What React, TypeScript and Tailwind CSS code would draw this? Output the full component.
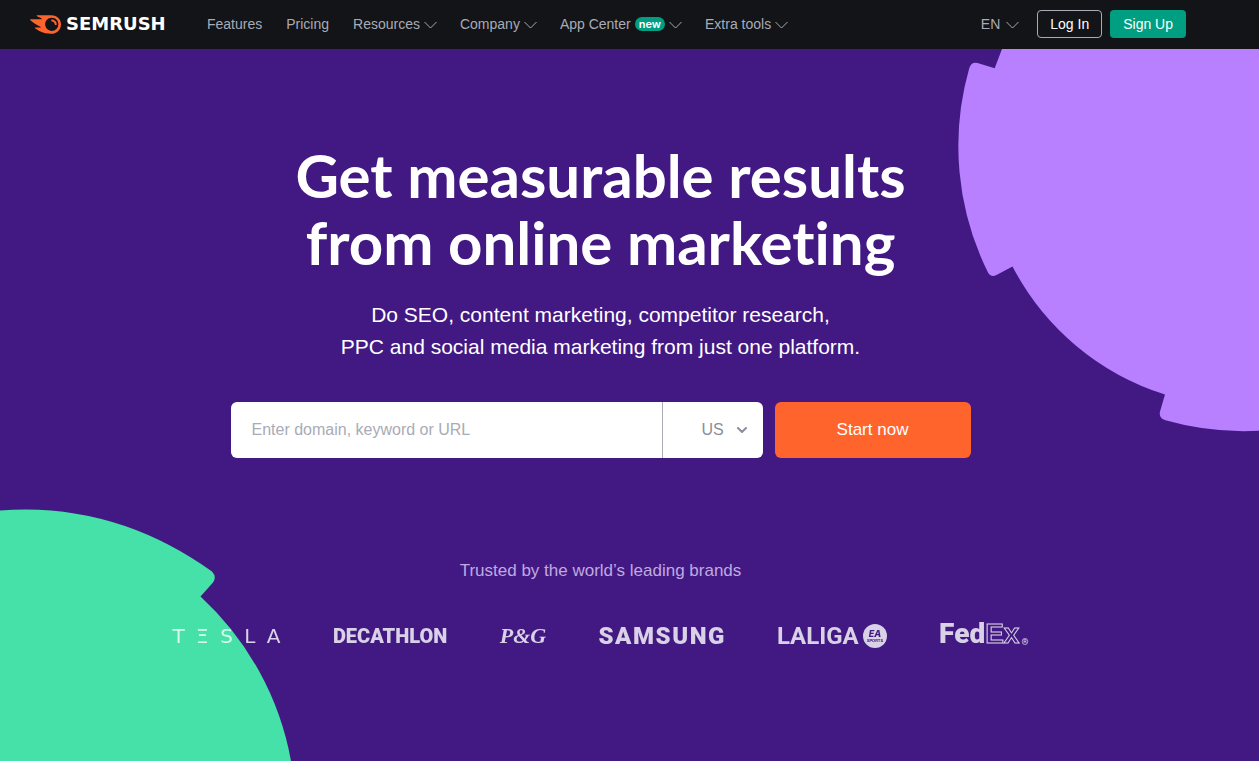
import React from "react";
import { SiSemrush } from "react-icons/si";

function Chevron() {
  return (
    <svg className="ml-1 mt-0.5 h-2 w-3 overflow-visible" viewBox="0 0 12 8" fill="none" stroke="currentColor" aria-hidden="true">
      <path d="M0.5 1 6.5 7 12.5 1" />
    </svg>
  );
}

const menus = [
  { label: "Resources" },
  { label: "Company" },
  { label: "App Center", badge: "new" },
  { label: "Extra tools" },
];

function Header() {
  return (
    <header className="flex h-[49px] items-center justify-between bg-[#121417] pr-[73px] pb-px pl-[30px] text-sm text-[#a9abb6]">
      <div className="flex items-center">
        <a href="#home" className="flex w-[177px] items-center text-white">
          <SiSemrush className="size-[31px] text-[#ff642d]" aria-hidden="true" />
          <span className="ml-[5px] font-['DejaVu_Sans'] text-lg leading-6 font-bold">SEMRUSH</span>
        </a>
        <nav className="flex items-center gap-6">
          <a href="#features">Features</a>
          <a href="#pricing">Pricing</a>
          {menus.map((m) => (
            <button key={m.label} type="button" className="flex items-center">
              {m.label}
              {m.badge && (
                <span className="ml-1 rounded-full bg-[#009f81] px-1 font-['Inter'] text-[11px] leading-[14px] font-semibold text-white">
                  {m.badge}
                </span>
              )}
              <Chevron />
            </button>
          ))}
        </nav>
      </div>
      <div className="flex items-center">
        <button type="button" className="flex items-center gap-0.5">
          EN
          <Chevron />
        </button>
        <a href="#login" className="ml-[19px] rounded border border-[#a9abb6] px-3 leading-[26px] text-white">
          Log In
        </a>
        <a href="#signup" className="ml-2 rounded bg-[#009f81] px-[13px] leading-7 text-white">
          Sign Up
        </a>
      </div>
    </header>
  );
}

function Shapes() {
  return (
    <>
      <svg className="absolute top-0 right-0 h-[383px] w-[301px]" viewBox="958 49 301 383" fill="#b880ff" aria-hidden="true">
        <path d="M1002 49 994.7 68.3 977.5 63Q971.5 61.5 969.3 68A284 284 0 0 0 988 272.5Q990.5 277.3 996 275.3L1012.5 266.5A260 260 0 0 0 1165 394.5L1160 411.5Q1158.5 418 1165.5 420.2A284 284 0 0 0 1259 430.7V49Z" />
      </svg>
      <svg className="absolute bottom-0 left-0 h-[253px] w-[292px]" viewBox="0 508 292 253" fill="#46e1a8" aria-hidden="true">
        <path d="M0 510.5A310 310 0 0 1 125 526Q170 541.5 212 571.5Q217 577 213 582.5L200.5 596.5A295 295 0 0 1 291 761H0Z" />
      </svg>
    </>
  );
}

function Brands() {
  return (
    <ul className="flex h-8 items-center justify-between font-['Roboto',sans-serif] leading-8 font-black whitespace-nowrap text-white opacity-80">
      <li aria-label="Tesla" className="flex w-[108px] justify-between font-['DejaVu_Sans'] text-xl leading-8 font-normal">
        {["T", "Ξ", "S", "L", "A"].map((c) => (
          <span key={c}>{c}</span>
        ))}
      </li>
      <li className="text-xl leading-8">DECATHLON</li>
      <li className="font-['Liberation_Serif'] text-[22px] font-bold italic">P&amp;G</li>
      <li aria-label="Samsung" className="flex w-[126px] justify-between text-2xl leading-8">
        {"SAMSUNG".split("").map((c, i) => (
          <span key={i}>{c}</span>
        ))}
      </li>
      <li className="flex items-center gap-1 text-2xl leading-8 font-bold">
        LALIGA
        <svg className="size-6" viewBox="0 0 24 24" role="img" aria-label="EA Sports">
          <circle cx="12" cy="12" r="12" fill="#fff" />
          <text x="12" y="12.5" textAnchor="middle" fontFamily="Inter" fontStyle="italic" fontWeight="800" fontSize="9" fill="#421983">EA</text>
          <text x="12" y="17.5" textAnchor="middle" fontFamily="Inter" fontWeight="700" fontSize="4" fill="#421983">SPORTS</text>
        </svg>
      </li>
      <li className="flex items-center pb-1 text-[28px] leading-8">
        <span>Fed</span>
        <span className="font-['Liberation_Sans'] text-transparent [-webkit-text-stroke:1px_white]">Ex</span>
        <span className="mt-4 ml-0.5 text-[9px]">®</span>
      </li>
    </ul>
  );
}

export default function App() {
  return (
    <div className="flex min-h-screen flex-col bg-[#421983] font-['Liberation_Sans',Arial,sans-serif]">
      <Header />
      <main className="relative grow overflow-hidden pr-[58px]">
        <Shapes />
        <div className="relative flex flex-col items-center pt-[93px] text-center text-white">
          <h1 className="font-['Lato'] text-[60px] leading-[67px] font-bold [font-variant-ligatures:none]">
            Get measurable results
            <br />
            from online marketing
          </h1>
          <p className="mt-[23px] text-[21px] leading-8">
            Do SEO, content marketing, competitor research,
            <br />
            PPC and social media marketing from just one platform.
          </p>
          <form className="mt-[39px] flex h-14 w-[740px] max-w-full gap-3" onSubmit={(e) => e.preventDefault()}>
            <div className="flex grow overflow-hidden rounded-md bg-white">
              <input
                type="text"
                aria-label="Domain, keyword or URL"
                placeholder="Enter domain, keyword or URL"
                className="min-w-0 grow px-[21px] text-base text-gray-800 outline-none placeholder:text-[#a9abb6]"
              />
              <div className="relative flex w-[101px] border-l border-[#a9abb6] text-[#8a8e9b]">
                <select aria-label="Country" defaultValue="US" className="w-full appearance-none bg-transparent pl-[39px] text-base outline-none">
                  <option>US</option>
                  <option>UK</option>
                </select>
                <svg className="pointer-events-none absolute top-6 right-4 h-2 w-2.5" viewBox="0 0 10 8" fill="none" stroke="currentColor" strokeWidth="2" strokeLinecap="round" strokeLinejoin="round" aria-hidden="true">
                  <path d="M1 2 5 6 9 2" />
                </svg>
              </div>
            </div>
            <button type="submit" className="w-[196px] rounded-md bg-[#ff642d] text-[17px] text-white">
              Start now
            </button>
          </form>
          <p className="mt-[101px] text-[17px] leading-6 text-[#c0a9e0]">Trusted by the world’s leading brands</p>
          <div className="mt-[37px] w-[856px] max-w-full">
            <Brands />
          </div>
        </div>
      </main>
    </div>
  );
}
